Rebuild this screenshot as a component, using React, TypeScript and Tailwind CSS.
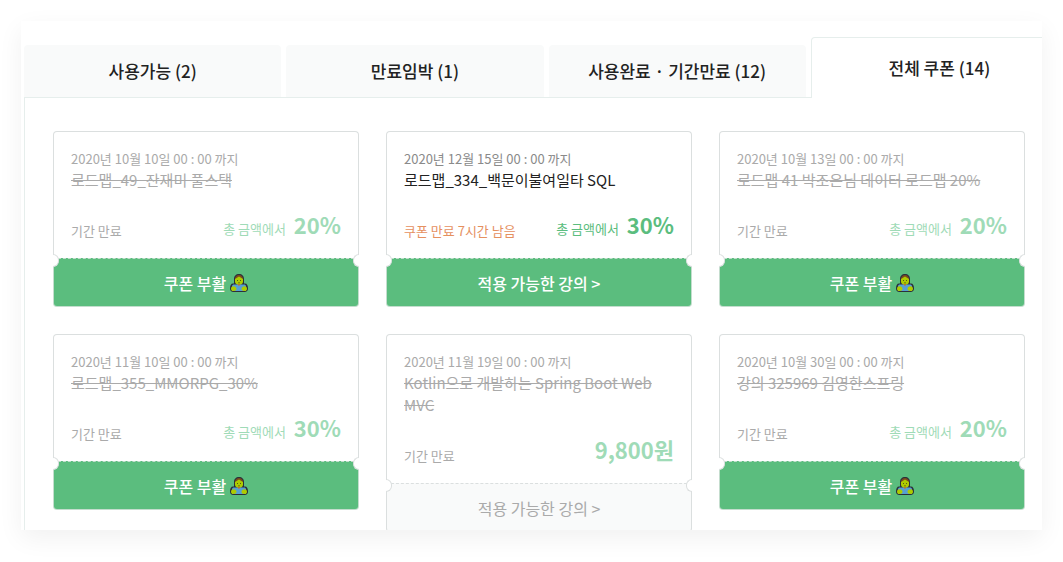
import clsx from 'clsx'

type Coupon = {
  until: string
  title: string
  status: string
  scope?: string
  discount: string
  state: 'expired' | 'active' | 'closed'
}

const tabs = ['사용가능 (2)', '만료임박 (1)', '사용완료 · 기간만료 (12)', '전체 쿠폰 (14)']

const coupons: Coupon[] = [
  { until: '2020년 10월 10일 00 : 00 까지', title: '로드맵_49_잔재미 풀스택', status: '기간 만료', scope: '총 금액에서', discount: '20%', state: 'expired' },
  { until: '2020년 12월 15일 00 : 00 까지', title: '로드맵_334_백문이불여일타 SQL', status: '쿠폰 만료 7시간 남음', scope: '총 금액에서', discount: '30%', state: 'active' },
  { until: '2020년 10월 13일 00 : 00 까지', title: '로드맵 41 박조은님 데이터 로드맵 20%', status: '기간 만료', scope: '총 금액에서', discount: '20%', state: 'expired' },
  { until: '2020년 11월 10일 00 : 00 까지', title: '로드맵_355_MMORPG_30%', status: '기간 만료', scope: '총 금액에서', discount: '30%', state: 'expired' },
  { until: '2020년 11월 19일 00 : 00 까지', title: 'Kotlin으로 개발하는 Spring Boot Web MVC', status: '기간 만료', discount: '9,800원', state: 'closed' },
  { until: '2020년 10월 30일 00 : 00 까지', title: '강의 325969 김영한스프링', status: '기간 만료', scope: '총 금액에서', discount: '20%', state: 'expired' },
]

function Zombie() {
  return (
    <svg viewBox="0 0 18 18" className="h-[18px] w-[18px]" aria-hidden="true">
      <path d="M9 0C6 0 4 2 4 5v4.500H3C1 9.500 0 11.500 0 14.500 0 16.800 1.200 18 3.500 18h11c2.300 0 3.500-1.200 3.500-3.500 0-3-1-5-3-5h-1V5c0-3-2-5-5-5Z" fill="#2b2f3a" />
      <path d="M5 5.500C5 2.500 6.500 1 9 1s4 1.500 4 4.500Z" fill="#7a4a1e" />
      <path d="M5 5 9 2.500 13 5v2.800C13 9.700 11.300 11 9 11S5 9.700 5 7.800Z" fill="#aecb00" />
      <path d="M2 12.200C2 11 3 10.400 4 10.400h10c1 0 2 .6 2 1.800V17H2Z" fill="#569fd3" />
      <path d="M7.600 10h2.800L9 12.200Z" fill="#c8731d" />
      <path d="M1 14.700C1 13 2 12.200 3.500 12.200c1.600 0 3 1.200 3 2.600S5.400 17 3.700 17 1 16.300 1 14.700ZM17 14.700c0-1.700-1-2.500-2.500-2.500-1.600 0-3 1.200-3 2.600s1.100 2.200 2.800 2.200 2.700-.7 2.700-2.300Z" fill="#aecb00" />
      <path d="M7 6h1v1H7ZM10 6h1v1h-1ZM8 8.500h2v.8H8Z" fill="#5a5a12" />
    </svg>
  )
}

function CouponCard({ coupon }: { coupon: Coupon }) {
  const active = coupon.state === 'active'
  const closed = coupon.state === 'closed'

  return (
    <article className="min-w-0">
      <div className={clsx('rounded-t border border-b-0 border-[#dbdfdf] p-[17px]', active ? 'text-[#8a8a8a]' : 'text-[#aaaaaa]')}>
        <p className="text-[13px] leading-5">{coupon.until}</p>
        <h3 className={clsx('text-[15px] leading-[22px]', active ? 'text-[#222222]' : 'line-through')}>{coupon.title}</h3>
        <div className="mt-[18px] flex items-end justify-between">
          <span className={clsx('text-[13px] leading-5', active && 'text-[#e5905f]')}>{coupon.status}</span>
          <span className={clsx('flex items-baseline gap-2 pb-0.5', active ? 'text-[#5bbd7e]' : 'text-[#9fdbb7]')}>
            {coupon.scope && <span className="text-[13px] leading-5">{coupon.scope}</span>}
            <strong className="text-[22px] leading-[30px] font-bold">{coupon.discount}</strong>
          </span>
        </div>
      </div>
      <div className="relative">
        <button
          type="button"
          className={clsx(
            'flex h-[49px] w-full items-center justify-center gap-1 rounded-b border [border-top-style:dashed]',
            closed
              ? 'border-[#dbdfdf] bg-[#f9fafa] text-[#aaaaaa]'
              : 'border-[#c4ddce] bg-[#5bbd7e] font-medium text-white',
          )}
        >
          {coupon.state === 'expired' ? (
            <>
              쿠폰 부활 <Zombie />
            </>
          ) : (
            '적용 가능한 강의 >'
          )}
        </button>
        {/* ticket notches */}
        <span className="absolute -top-1 left-0 h-[13px] w-[6px] rounded-r-full border border-l-0 border-[#dbdfdf] bg-white" />
        <span className="absolute -top-1 right-0 h-[13px] w-[6px] rounded-l-full border border-r-0 border-[#dbdfdf] bg-white" />
      </div>
    </article>
  )
}

export default function App() {
  return (
    <div className="overflow-hidden bg-white px-[21px] pt-[21px] pb-8 font-['Noto_Sans_CJK_KR',sans-serif]">
      <main className="overflow-hidden bg-white pt-4 pl-[3px] shadow-[0_8px_24px_rgba(0,0,0,0.06)]">
        {/* the last tab runs past the right edge */}
        <nav className="-mr-[26px] grid grid-cols-4 items-end gap-[5px]">
          {tabs.map((tab, i) => (
            <button
              key={tab}
              type="button"
              className={clsx(
                'rounded-t text-[17px] font-medium text-[#222222]',
                i === tabs.length - 1 ? 'relative -mb-px h-[61px] border border-b-0 border-[#e6eeec] bg-white' : 'h-[52px] bg-[#f9fafa]',
              )}
            >
              {tab}
            </button>
          ))}
        </nav>
        <section className="border-t border-l border-[#e6eeec] pt-[33px] pr-[17px] pl-7">
          <div className="-mb-[2px] grid grid-cols-3 items-start gap-[27px]">
            {coupons.map((coupon) => (
              <CouponCard key={coupon.title} coupon={coupon} />
            ))}
          </div>
        </section>
      </main>
    </div>
  )
}
